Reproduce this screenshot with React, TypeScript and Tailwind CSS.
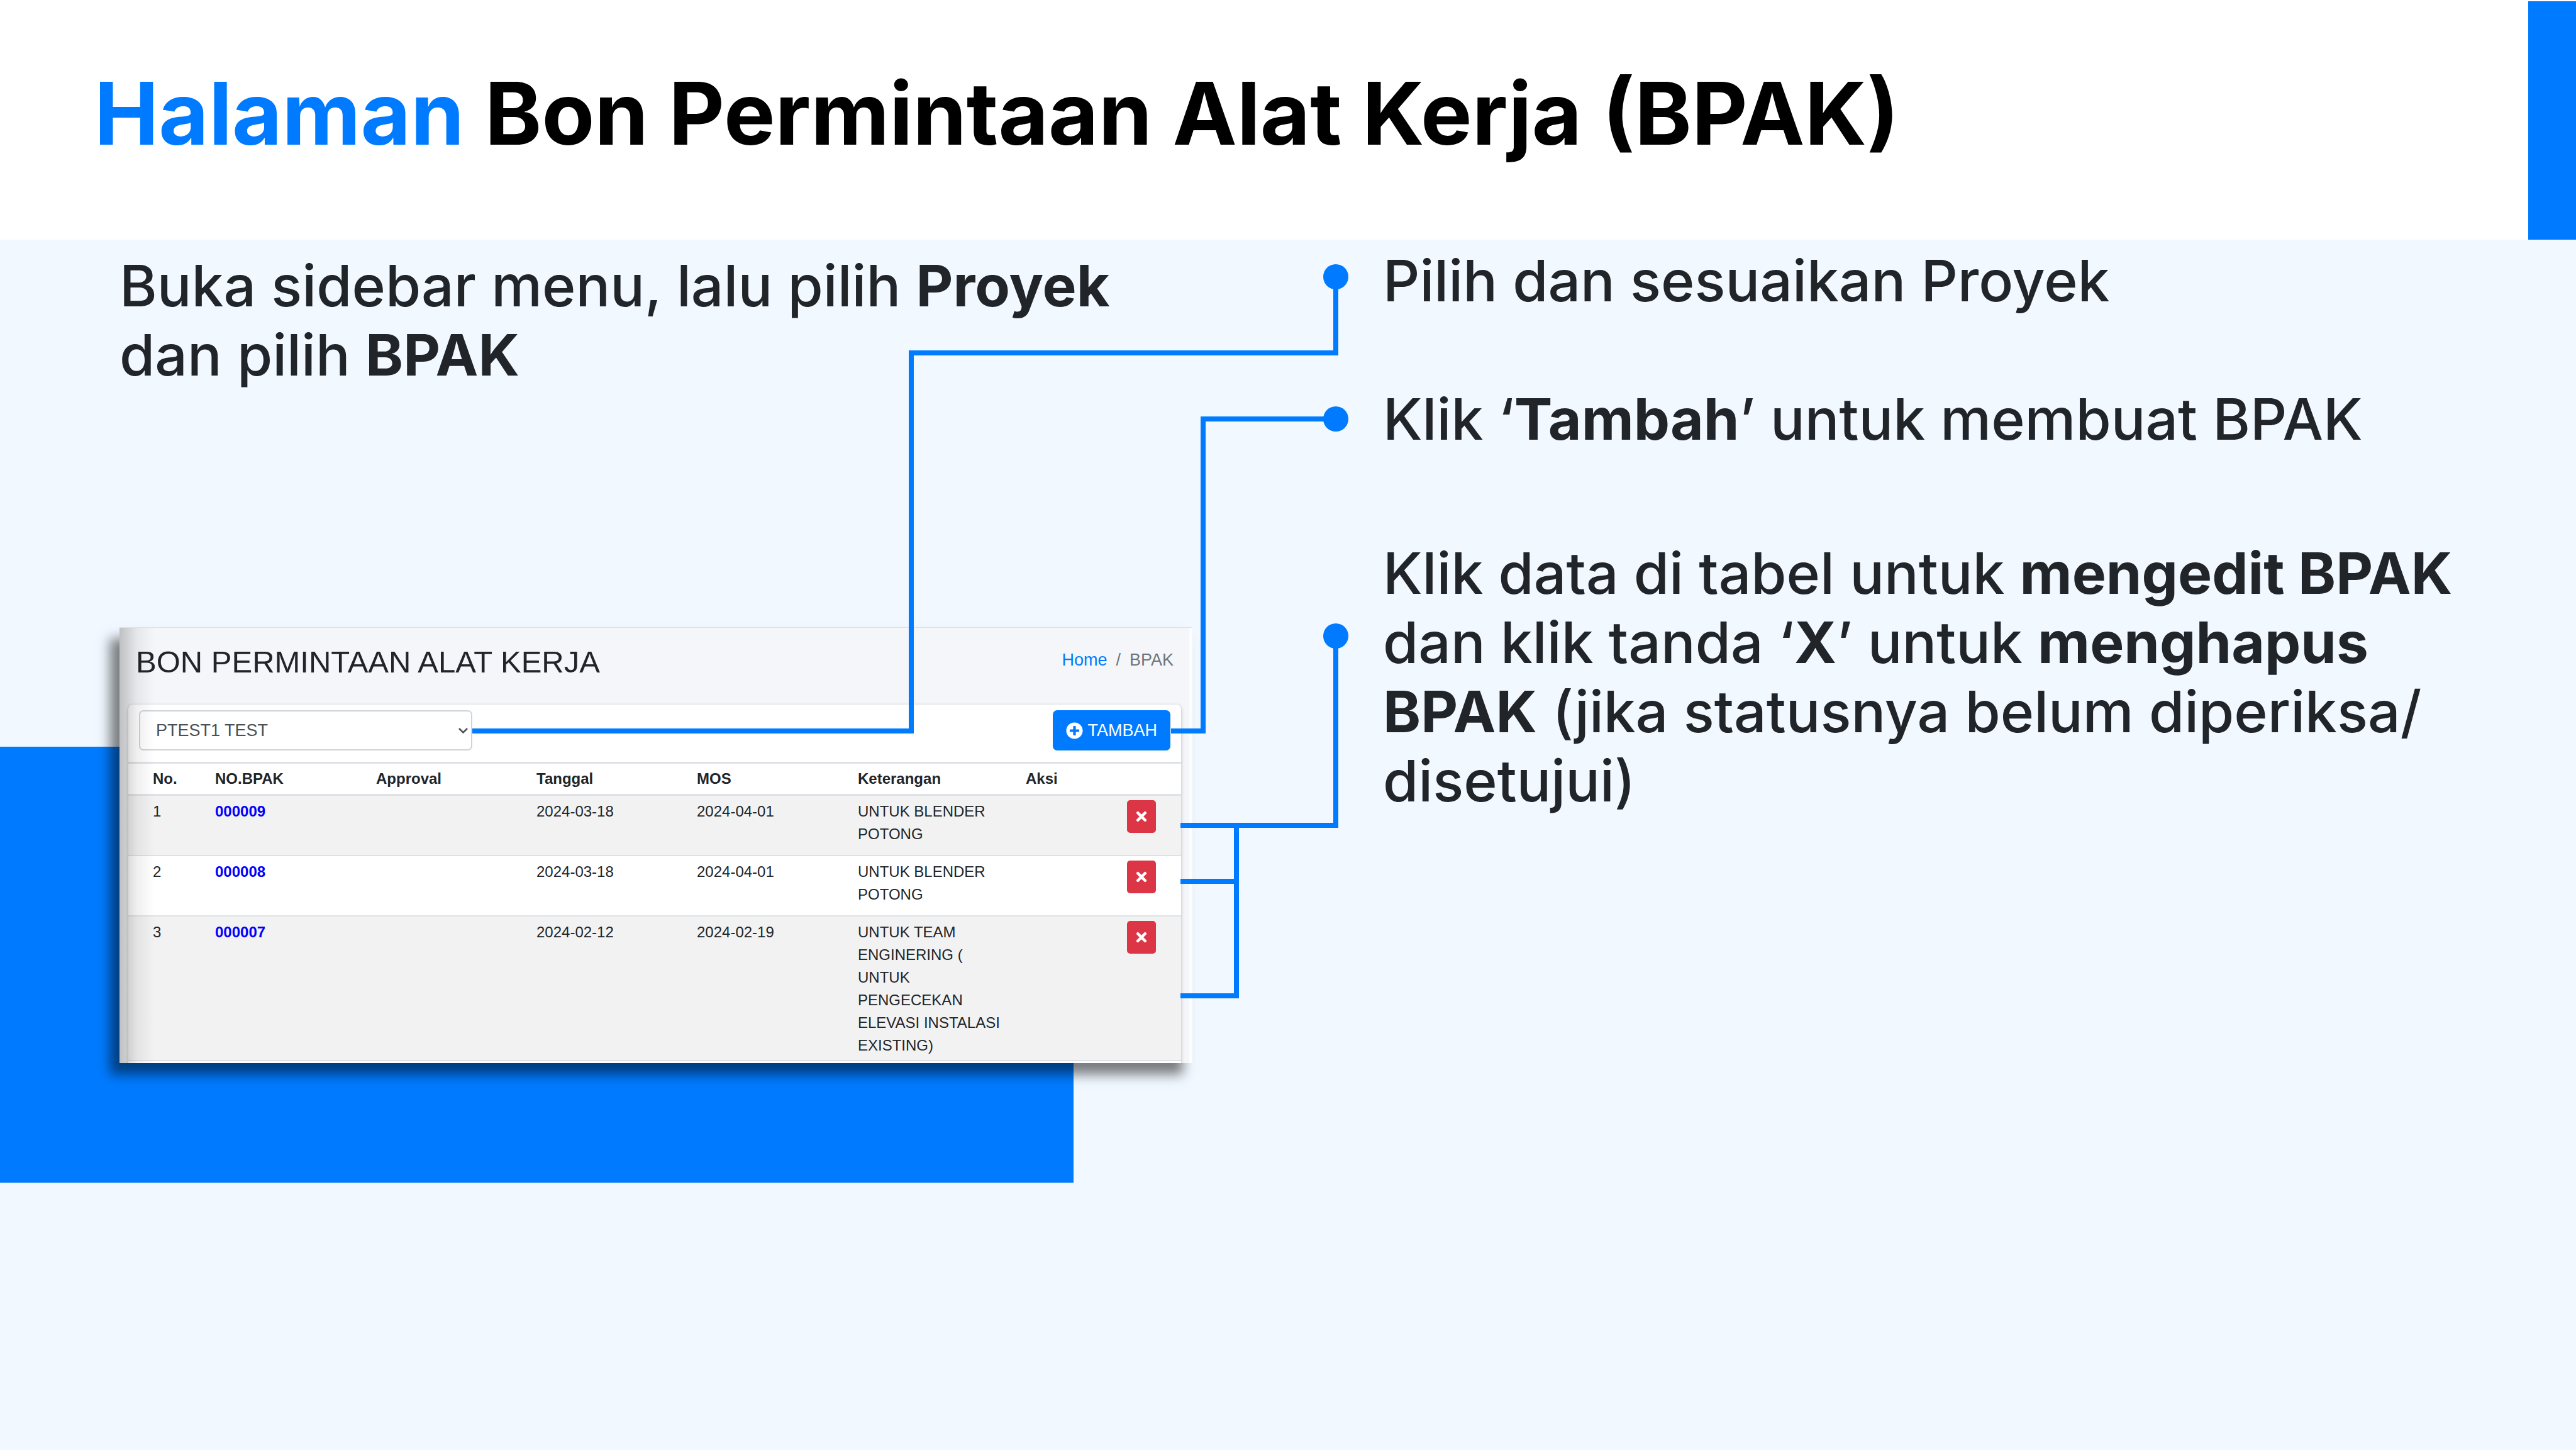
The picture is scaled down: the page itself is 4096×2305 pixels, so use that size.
import React from "react";
import { FaPlusCircle, FaTimes } from "react-icons/fa";

const rows = [
  { no: 1, id: "000009", tanggal: "2024-03-18", mos: "2024-04-01", ket: ["UNTUK BLENDER", "POTONG"] },
  { no: 2, id: "000008", tanggal: "2024-03-18", mos: "2024-04-01", ket: ["UNTUK BLENDER", "POTONG"] },
  {
    no: 3,
    id: "000007",
    tanggal: "2024-02-12",
    mos: "2024-02-19",
    ket: ["UNTUK TEAM", "ENGINERING (", "UNTUK", "PENGECEKAN", "ELEVASI INSTALASI", "EXISTING)"],
  },
];

function Panel() {
  return (
    <section className="relative flex h-[693px] flex-col overflow-hidden border-t border-[#dee2e6] bg-[#f4f6f9] pr-[18px] pl-[14px] font-['Liberation_Sans',sans-serif] text-[#212529]">
      <div className="flex h-[122px] shrink-0 items-center justify-between pr-[12px] pl-[12px]">
        <h2 className="pb-[14px] text-[49px] leading-[60px]">BON PERMINTAAN ALAT KERJA</h2>
        <nav aria-label="Breadcrumb" className="flex gap-[14px] pb-[20px] text-[27px] leading-[40px]">
          <a href="#home" className="text-[#007bff]">Home</a>
          <span className="text-[#6c757d]">/</span>
          <span className="text-[#6c757d]">BPAK</span>
        </nav>
      </div>
      <div className="-mb-[8px] grow rounded-t-[7px] bg-white shadow-[0_0_2px_rgba(0,0,0,0.13),0_2px_6px_rgba(0,0,0,0.2)]">
        <div className="flex h-[91px] justify-between px-[17px] pt-[9px]">
          <div className="relative">
            <select
              aria-label="Proyek"
              className="block h-[64px] w-[530px] appearance-none rounded-[7px] border-2 border-[#ced4da] bg-white pr-[40px] pl-[25px] text-[27px] leading-[40px] text-[#495057]"
            >
              <option>PTEST1 TEST</option>
            </select>
            <svg className="pointer-events-none absolute top-[28px] right-[7px] h-[9px] w-[15px]" viewBox="0 0 15 9" fill="none" stroke="#495057" strokeWidth="2.5">
              <path d="M1 1l6.500 6.500L14 1" />
            </svg>
          </div>
          <button className="flex h-[64px] items-center gap-[7px] rounded-[7px] bg-[#007bff] px-[21px] text-[27px] leading-[40px] text-white">
            <FaPlusCircle />
            TAMBAH
          </button>
        </div>
        <table className="w-full table-fixed border-collapse text-left text-[24px] leading-[36px]">
          <colgroup>
            <col className="w-[130px]" />
            <col className="w-[256px]" />
            <col className="w-[255px]" />
            <col className="w-[255px]" />
            <col className="w-[256px]" />
            <col className="w-[267px]" />
            <col />
          </colgroup>
          <thead>
            <tr className="h-[51px] border-y-[3px] border-[#dee2e6]">
              <th className="pl-[39px]">No.</th>
              <th className="pl-[8px]">NO.BPAK</th>
              <th className="pl-[8px]">Approval</th>
              <th className="pl-[8px]">Tanggal</th>
              <th className="pl-[8px]">MOS</th>
              <th className="pl-[8px]">Keterangan</th>
              <th className="pl-[8px]">Aksi</th>
            </tr>
          </thead>
          <tbody>
            {rows.map((r) => (
              <tr key={r.no} className="h-[96px] border-b-2 border-[#dee2e6] align-top odd:bg-[#f2f2f2]">
                <td className="pt-[7px] pl-[39px]">{r.no}</td>
                <td className="pt-[7px] pl-[8px] font-bold text-[#0000ff]">
                  <a href={"#" + r.id}>{r.id}</a>
                </td>
                <td />
                <td className="pt-[7px] pl-[8px]">{r.tanggal}</td>
                <td className="pt-[7px] pl-[8px]">{r.mos}</td>
                <td className="pt-[7px] pb-[5px] pl-[8px]">
                  {r.ket.map((line) => (
                    <div key={line}>{line}</div>
                  ))}
                </td>
                <td className="pt-[7px] pr-[40px]">
                  <button aria-label={"Hapus " + r.id} className="ml-auto flex h-[52px] w-[46px] items-center justify-center rounded-[5px] bg-[#dc3545] text-white">
                    <FaTimes />
                  </button>
                </td>
              </tr>
            ))}
          </tbody>
        </table>
      </div>
      <div className="pointer-events-none absolute inset-y-0 left-0 w-[56px] bg-linear-to-r from-black/22 via-black/6 to-transparent" />
      <div className="pointer-events-none absolute inset-y-0 right-0 w-[5px] bg-[#fcfdff]" />
    </section>
  );
}

function Connectors() {
  return (
    <svg className="pointer-events-none absolute top-0 left-0 h-[2305px] w-[4096px]" viewBox="0 0 4096 2305" fill="none" stroke="#007bff" strokeWidth="8" aria-hidden="true">
      <path d="M751 1162H1449V561H2124V440" />
      <path d="M1862 1162H1913V666H2124" />
      <path d="M1877 1312H2124V1011" />
      <path d="M1877 1401H1966M1877 1583H1966V1312" />
      <g fill="#007bff" stroke="none">
        <circle cx="2124" cy="440" r="20" />
        <circle cx="2124" cy="666" r="20" />
        <circle cx="2124" cy="1011" r="20" />
      </g>
    </svg>
  );
}

export default function App() {
  return (
    <main className="relative flex min-h-screen flex-col bg-[#f1f8ff] font-['Inter',sans-serif] text-[#212529]">
      <header className="flex h-[381px] justify-between bg-white">
        <h1 className="pt-[97px] pl-[150px] text-[137px] leading-[166px] font-bold text-black">
          <span className="text-[#007bff]">Halaman</span> Bon Permintaan Alat Kerja (BPAK)
        </h1>
        <div className="mt-[2px] w-[76px] bg-[#007bff]" />
      </header>
      <div className="flex text-[91px] leading-[110px] font-medium">
        <div className="relative w-[2190px] shrink-0">
          <div className="absolute top-[806px] left-0 h-[693px] w-[1707px] bg-[#007bff]" />
          <p className="h-[616px] pt-[18px] pl-[190px]">
            Buka sidebar menu, lalu pilih <b>Proyek</b>
            <br />
            dan pilih <b>BPAK</b>
          </p>
          <div className="relative ml-[190px] w-[1706px] font-normal shadow-[-15px_18px_18px_rgba(0,0,0,0.5)]">
            <Panel />
          </div>
        </div>
        <div className="pt-[10px] pl-[9px]">
          <p>Pilih dan sesuaikan Proyek</p>
          <p className="mt-[110px]">
            Klik ‘<b>Tambah</b>’ untuk membuat BPAK
          </p>
          <p className="mt-[135px]">
            Klik data di tabel untuk <b>mengedit BPAK</b>
            <br />
            dan klik tanda ‘<b>X</b>’ untuk <b>menghapus</b>
            <br />
            <b>BPAK</b> (jika statusnya belum diperiksa/
            <br />
            disetujui)
          </p>
        </div>
      </div>
      <Connectors />
    </main>
  );
}
